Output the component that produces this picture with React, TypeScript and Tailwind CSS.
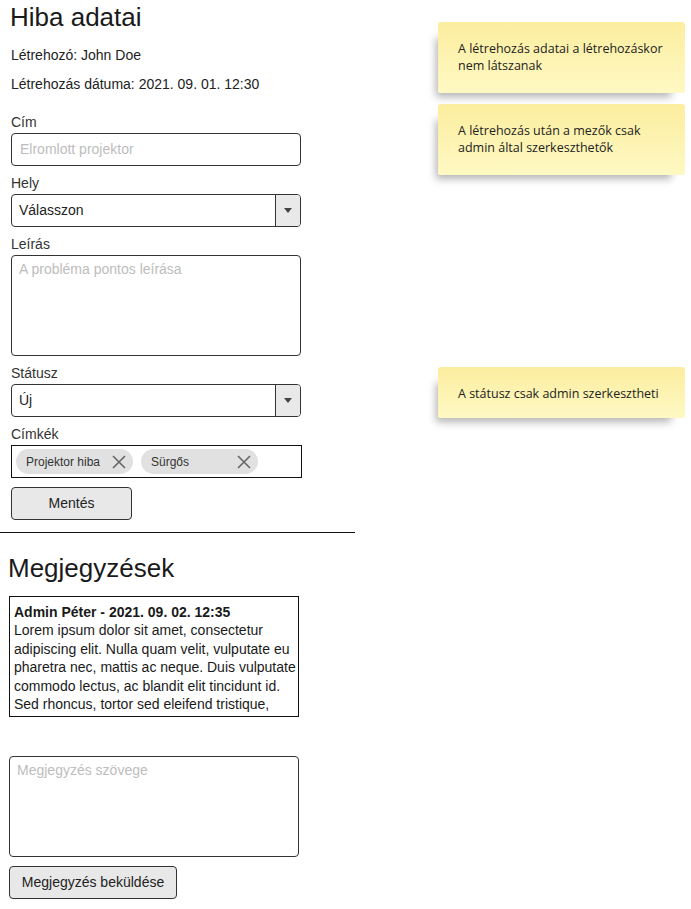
const notes = [
  { text: ['A létrehozás adatai a létrehozáskor', 'nem látszanak'], className: 'mt-[22px] h-[71px]' },
  { text: ['A létrehozás után a mezők csak', 'admin által szerkeszthetők'], className: 'mt-[11px] h-[71px]' },
  { text: ['A státusz csak admin szerkesztheti'], className: 'mt-[192px] h-[51px]' },
];

const comment = [
  'Lorem ipsum dolor sit amet, consectetur',
  'adipiscing elit. Nulla quam velit, vulputate eu',
  'pharetra nec, mattis ac neque. Duis vulputate',
  'commodo lectus, ac blandit elit tincidunt id.',
  'Sed rhoncus, tortor sed eleifend tristique,',
];

function Label({ children }: { children: React.ReactNode }) {
  return <div className="h-[21px] text-[14px] leading-[20px] text-[#333]">{children}</div>;
}

function Select({ value }: { value: string }) {
  return (
    <div className="flex h-[33px] w-[290px] overflow-hidden rounded-[4px] border border-[#333] bg-white">
      <div className="flex-1 pl-[7px] text-[14px] leading-[31px] text-[#222]">{value}</div>
      <div className="flex w-[25px] items-center justify-center border-l border-[#333] bg-[#e9e9e9]">
        <svg width="8" height="5" viewBox="0 0 8 5">
          <path d="M0 0 L8 0 L4 5 Z" fill="#444" />
        </svg>
      </div>
    </div>
  );
}

function Chip({ label, width }: { label: string; width: string }) {
  return (
    <div className={`flex h-[25px] items-center justify-between rounded-full bg-[#e1e1e1] pl-[10px] pr-[7px] ${width}`}>
      <span className="text-[12px] text-[#333]">{label}</span>
      <svg width="14" height="14" viewBox="0 0 14 14">
        <path d="M1 1 L13 13 M13 1 L1 13" stroke="#666" strokeWidth="1.6" />
      </svg>
    </div>
  );
}

export default function App() {
  return (
    <div className="flex min-h-[909px] w-[691px] bg-white [font-family:'Liberation_Sans',Arial,sans-serif] text-[#222]">
      <div className="flex w-[355px] flex-col">
        <div className="flex flex-col pl-[11px]">
          <h1 className="ml-[-1px] h-[34px] text-[26px] leading-[34px] text-[#1a1a1a]">Hiba adatai</h1>
          <p className="mt-[11px] h-[20px] text-[14px] leading-[20px]">Létrehozó: John Doe</p>
          <p className="mt-[9px] h-[20px] text-[14px] leading-[20px]">Létrehozás dátuma: 2021. 09. 01. 12:30</p>

          <div className="mt-[18px]">
            <Label>Cím</Label>
            <div className="h-[33px] w-[290px] rounded-[4px] border border-[#333] pl-[8px] text-[14px] leading-[31px] text-[#bdbdbd]">
              Elromlott projektor
            </div>
          </div>

          <div className="mt-[7px]">
            <Label>Hely</Label>
            <Select value="Válasszon" />
          </div>

          <div className="mt-[7px]">
            <Label>Leírás</Label>
            <div className="h-[101px] w-[290px] rounded-[4px] border border-[#333] pl-[7px] pt-[4px] text-[14px] leading-[18px] text-[#bdbdbd]">
              A probléma pontos leírása
            </div>
          </div>

          <div className="mt-[7px]">
            <Label>Státusz</Label>
            <Select value="Új" />
          </div>

          <div className="mt-[7px]">
            <Label>Címkék</Label>
            <div className="flex h-[33px] w-[291px] items-center gap-[8px] border border-[#111] pl-[4px]">
              <Chip label="Projektor hiba" width="w-[117px]" />
              <Chip label="Sürgős" width="w-[117px]" />
            </div>
          </div>

          <button className="mt-[9px] h-[33px] w-[121px] rounded-[4px] border border-[#333] bg-[#e8e8e8] text-[14px] text-[#222]">
            Mentés
          </button>
        </div>

        <div className="mt-[12px] h-px w-[355px] bg-[#111]" />

        <div className="flex flex-col pl-[9px]">
          <h2 className="ml-[-1px] mt-[20px] h-[30px] text-[26px] leading-[30px] text-[#1a1a1a]">Megjegyzések</h2>
          <div className="mt-[13px] h-[121px] w-[290px] overflow-hidden border border-[#111] pl-[4px] pt-[6px] text-[14px] leading-[18.4px] text-[#1a1a1a]">
            <div className="font-bold">Admin Péter - 2021. 09. 02. 12:35</div>
            {comment.map((line) => (
              <div key={line} className="whitespace-nowrap">{line}</div>
            ))}
          </div>

          <div className="mt-[39px] h-[101px] w-[290px] rounded-[4px] border border-[#333] pl-[7px] pt-[4px] text-[14px] leading-[18px] text-[#bdbdbd]">
            Megjegyzés szövege
          </div>
          <button className="mt-[9px] h-[33px] w-[168px] rounded-[4px] border border-[#333] bg-[#e8e8e8] text-[14px] text-[#222]">
            Megjegyzés beküldése
          </button>
        </div>
      </div>

      <div className="ml-[83px] flex w-[247px] flex-col">
        {notes.map((note) => (
          <div
            key={note.text[0]}
            className={`rounded-[3px] bg-gradient-to-b from-[#fcee9f] to-[#fef8c3] pl-[20px] pt-[18px] [font-family:'Open_Sans',sans-serif] text-[12.5px] leading-[17px] text-[#222] shadow-[-8px_10px_8px_-6px_rgba(0,0,0,0.3)] ${note.className}`}
          >
            {note.text.map((line) => (
              <div key={line}>{line}</div>
            ))}
          </div>
        ))}
      </div>
    </div>
  );
}
